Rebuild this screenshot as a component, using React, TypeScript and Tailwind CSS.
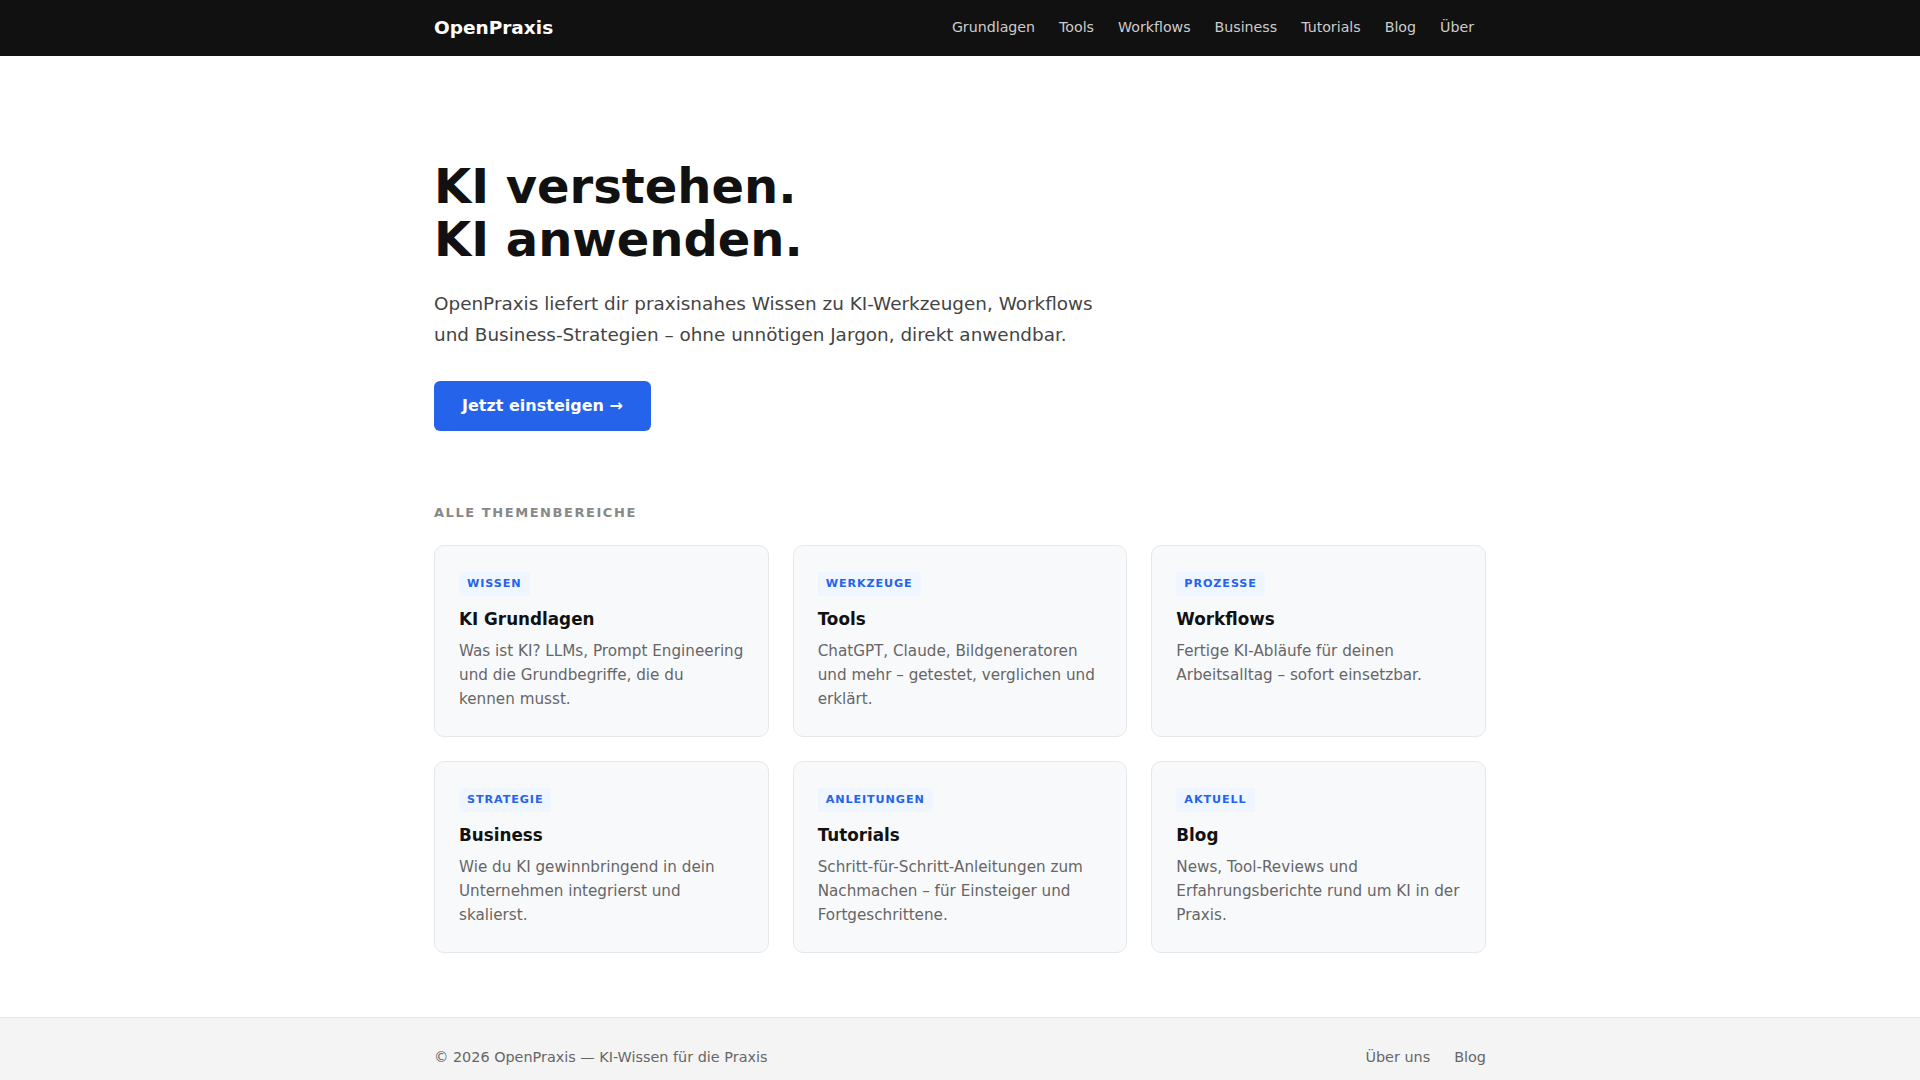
import React from "react";

const nav = ["Grundlagen", "Tools", "Workflows", "Business", "Tutorials", "Blog", "Über"];

const cards = [
  { tag: "WISSEN", title: "KI Grundlagen", desc: "Was ist KI? LLMs, Prompt Engineering und die Grundbegriffe, die du kennen musst." },
  { tag: "WERKZEUGE", title: "Tools", desc: "ChatGPT, Claude, Bildgeneratoren und mehr – getestet, verglichen und erklärt." },
  { tag: "PROZESSE", title: "Workflows", desc: "Fertige KI-Abläufe für deinen Arbeitsalltag – sofort einsetzbar." },
  { tag: "STRATEGIE", title: "Business", desc: "Wie du KI gewinnbringend in dein Unternehmen integrierst und skalierst." },
  { tag: "ANLEITUNGEN", title: "Tutorials", desc: "Schritt-für-Schritt-Anleitungen zum Nachmachen – für Einsteiger und Fortgeschrittene." },
  { tag: "AKTUELL", title: "Blog", desc: "News, Tool-Reviews und Erfahrungsberichte rund um KI in der Praxis." },
];

export default function App() {
  return (
    <div className="min-h-screen bg-white font-['DejaVu_Sans',sans-serif] text-[#111]">
      <header className="bg-[#111111]">
        <div className="mx-auto flex h-14 max-w-[1100px] items-center justify-between px-6">
          <a className="text-[18.5px] font-bold text-white">OpenPraxis</a>
          <nav className="flex items-center">
            {nav.map((n) => (
              <a key={n} className="px-3 text-[14.2px] text-[#cccccc]">
                {n}
              </a>
            ))}
          </nav>
        </div>
      </header>

      <main className="mx-auto max-w-[1100px] px-6">
        <section className="pt-[104px]">
          <h1 className="text-[48px] font-bold leading-[1.1] text-[#111]">
            KI verstehen.
            <br />
            KI anwenden.
          </h1>
          <p className="mt-[22px] max-w-[680px] text-[18.4px] leading-[1.7] text-[#444]">
            OpenPraxis liefert dir praxisnahes Wissen zu KI-Werkzeugen, Workflows und Business-Strategien – ohne unnötigen Jargon, direkt anwendbar.
          </p>
          <a className="mt-[31px] inline-block rounded-md bg-[#2563eb] px-7 py-[13px] text-[16px] font-bold leading-6 text-white">
            Jetzt einsteigen →
          </a>
        </section>

        <section className="pb-[64px] pt-[72px]">
          <h2 className="mb-[22px] text-[13px] font-bold uppercase leading-[1.5] tracking-[0.12em] text-[#888]">
            Alle Themenbereiche
          </h2>
          <div className="grid grid-cols-3 gap-6">
            {cards.map((c) => (
              <div key={c.title} className="rounded-[10px] border border-[#e5e7eb] bg-[#f8f9fb] p-6">
                <span className="inline-block rounded-[3px] bg-[#eff6ff] px-2 py-1 text-[11.2px] font-bold leading-4 tracking-[0.08em] text-[#2563eb]">
                  {c.tag}
                </span>
                <h3 className="mt-[11px] text-[16.8px] font-bold leading-6 text-[#111]">{c.title}</h3>
                <p className="mt-2 text-[15.2px] leading-[1.6] text-[#666]">{c.desc}</p>
              </div>
            ))}
          </div>
        </section>
      </main>

      <footer className="border-t border-[#e5e5e5] bg-[#f4f4f4]">
        <div className="mx-auto flex max-w-[1100px] items-center justify-between px-6 py-[29px] text-[14.4px] leading-5 text-[#666]">
          <span>© 2026 OpenPraxis — KI-Wissen für die Praxis</span>
          <div className="flex gap-6">
            <a>Über uns</a>
            <a>Blog</a>
          </div>
        </div>
      </footer>
    </div>
  );
}
